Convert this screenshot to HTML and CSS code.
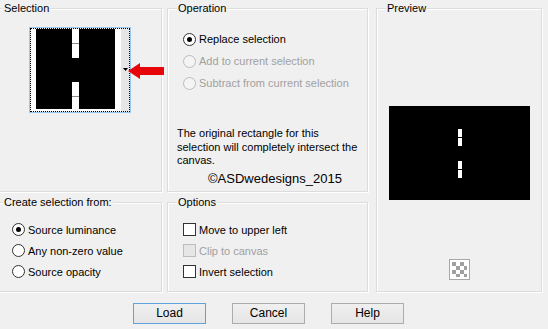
FILE: index.html
```html
<!DOCTYPE html>
<html lang="en">

<head>
    <meta charset="UTF-8">
    <title>Load Selection From Alpha Channel</title>
    <link rel="stylesheet" href="styles.css">
</head>

<body>
    <div class="dialog">
        <!-- 选区缩略图 -->
        <div class="group sel">
            <span class="title">Selection</span>
            <div class="thumb">
                <div class="thumb-in">
                    <svg width="98" height="82" viewBox="0 0 98 82">
                        <rect x="0" y="0" width="98" height="82" fill="#fff"/>
                        <rect x="5" y="0" width="79" height="80" fill="#000"/>
                        <rect x="41" y="0" width="7" height="29" fill="#fff"/>
                        <rect x="41" y="14" width="7" height="1" fill="#8a8a8a"/>
                        <rect x="41" y="53" width="7" height="27" fill="#fff"/>
                        <rect x="41" y="67" width="7" height="1" fill="#8a8a8a"/>
                        <rect x="90" y="0" width="8" height="82" fill="#e6e6e6"/>
                        <polygon points="92,39 97,39 94.5,42" fill="#000"/>
                    </svg>
                </div>
            </div>
            <svg class="red-arrow" width="38" height="18" viewBox="0 0 38 18">
                <polygon points="1,9 13,1 13,5 37,5 37,13 13,13 13,17" fill="#e8050a"/>
            </svg>
        </div>

        <!-- 操作 -->
        <div class="group op">
            <span class="title">Operation</span>
            <div class="list">
                <div class="row"><span class="radio on"></span>Replace selection</div>
                <div class="row off"><span class="radio"></span>Add to current selection</div>
                <div class="row off"><span class="radio"></span>Subtract from current selection</div>
            </div>
            <p class="info">The original rectangle for this<br>selection will completely intersect the<br>canvas.</p>
            <p class="credit">©ASDwedesigns_2015</p>
        </div>

        <!-- 预览 -->
        <div class="group preview">
            <span class="title">Preview</span>
            <svg class="pic" width="141" height="94" viewBox="0 0 141 94">
                <rect width="141" height="94" fill="#000"/>
                <rect x="69" y="23" width="4" height="8" fill="#fff"/>
                <rect x="69" y="32" width="4" height="8" fill="#fff"/>
                <rect x="69" y="55" width="4" height="8" fill="#fff"/>
                <rect x="69" y="64" width="4" height="8" fill="#fff"/>
            </svg>
            <svg class="checker" width="21" height="21" viewBox="0 0 21 21">
                <rect x="0.5" y="0.5" width="20" height="20" fill="#fff" stroke="#a8a8a8"/>
                <rect x="3" y="3" width="4" height="4" fill="#a0a0a0"/>
                <rect x="11" y="3" width="4" height="4" fill="#a0a0a0"/>
                <rect x="7" y="7" width="4" height="4" fill="#a0a0a0"/>
                <rect x="15" y="7" width="3" height="4" fill="#a0a0a0"/>
                <rect x="3" y="11" width="4" height="4" fill="#a0a0a0"/>
                <rect x="11" y="11" width="4" height="4" fill="#a0a0a0"/>
                <rect x="7" y="15" width="4" height="3" fill="#a0a0a0"/>
                <rect x="15" y="15" width="3" height="3" fill="#a0a0a0"/>
            </svg>
        </div>

        <!-- 选区来源 -->
        <div class="group src">
            <span class="title">Create selection from:</span>
            <div class="list">
                <div class="row"><span class="radio on"></span>Source luminance</div>
                <div class="row"><span class="radio"></span>Any non-zero value</div>
                <div class="row"><span class="radio"></span>Source opacity</div>
            </div>
        </div>

        <!-- 选项 -->
        <div class="group opts">
            <span class="title">Options</span>
            <div class="list">
                <div class="row"><span class="check"></span>Move to upper left</div>
                <div class="row off"><span class="check"></span>Clip to canvas</div>
                <div class="row"><span class="check"></span>Invert selection</div>
            </div>
        </div>
    </div>

    <div class="buttons">
        <a href="javascript:;" class="btn default">Load</a>
        <a href="javascript:;" class="btn">Cancel</a>
        <a href="javascript:;" class="btn">Help</a>
    </div>
</body>

</html>
```
FILE: styles.css
```css
* {
    margin: 0;
    padding: 0;
    box-sizing: border-box;
}

a {
    text-decoration: none;
    color: #000;
}

body {
    width: 548px;
    height: 329px;
    overflow: hidden;
    background-color: #f0f0f0;
    font-family: "Liberation Sans", Arial, sans-serif;
    font-size: 11px;
    color: #000;
}

.dialog {
    display: grid;
    grid-template-columns: 169px 201px 171px;
    grid-template-rows: 184px 90px;
    column-gap: 5px;
    row-gap: 10px;
    margin: 8px 0 0 -7px;
}

.group {
    position: relative;
    border: 1px solid #dcdcdc;
    box-shadow: inset 1px 1px 0 #fff, 1px 1px 0 #fff;
}

.group .title {
    position: absolute;
    top: -9px;
    left: 9px;
    padding: 0 1px;
    line-height: 16px;
    background-color: #f0f0f0;
    white-space: nowrap;
}

.thumb {
    width: 102px;
    height: 86px;
    margin: 18px 0 0 35px;
    border: 1px solid #99c9ef;
}

.thumb-in {
    width: 100px;
    height: 84px;
    border: 1px dotted #000;
}

.thumb-in svg {
    display: block;
}

.red-arrow {
    position: absolute;
    left: 133px;
    top: 53px;
}

.list {
    display: flex;
    flex-direction: column;
}

.row {
    display: flex;
    align-items: center;
    gap: 3px;
    height: 22px;
    white-space: nowrap;
}

.row.off {
    color: #a0a0a0;
}

.radio {
    position: relative;
    width: 13px;
    height: 13px;
    border: 1px solid #333;
    border-radius: 50%;
    background-color: #fff;
    flex-shrink: 0;
}

.radio.on::after {
    content: "";
    position: absolute;
    left: 3px;
    top: 3px;
    width: 5px;
    height: 5px;
    border-radius: 50%;
    background-color: #000;
}

.row.off .radio {
    border-color: #bcbcbc;
    background-color: #f4f4f4;
}

.check {
    width: 13px;
    height: 13px;
    border: 1px solid #333;
    background-color: #fff;
    flex-shrink: 0;
}

.row.off .check {
    border-color: #bcbcbc;
    background-color: #e6e6e6;
}

.op .list {
    padding: 19px 0 0 15px;
}

.info {
    margin: 33px 0 0 9px;
    line-height: 13.5px;
    white-space: nowrap;
}

.credit {
    margin: 3px 0 0 40px;
    font-size: 13px;
    line-height: 16px;
}

.preview {
    grid-row: 1 / 3;
    grid-column: 3;
    width: 166px;
    margin-left: 3px;
    display: flex;
    flex-direction: column;
    align-items: center;
}

.preview .pic {
    margin-top: 97px;
}

.preview .checker {
    margin-top: 59px;
}

.src .list {
    padding: 16px 0 0 18px;
}

.opts .list {
    padding: 16px 0 0 15px;
}

.src .row,
.opts .row {
    height: 21px;
}

.buttons {
    display: flex;
    gap: 26px;
    margin: 11px 0 0 133px;
}

.btn {
    width: 73px;
    height: 21px;
    line-height: 19px;
    text-align: center;
    font-size: 12px;
    border: 1px solid #acacac;
    background: linear-gradient(#f0f0f0, #e5e5e5);
}

.btn.default {
    border-color: #5fa2dd;
}
```
